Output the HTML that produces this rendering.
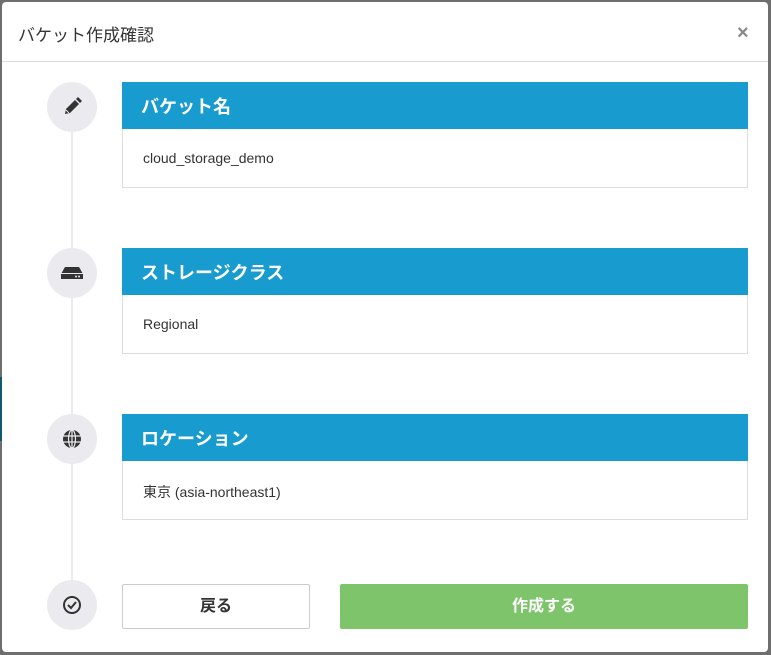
<!DOCTYPE html>
<html><head><meta charset="utf-8"><style>
*{margin:0;padding:0;box-sizing:border-box}
body{width:771px;height:655px;background:#6e6e6e;position:relative;overflow:hidden;font-family:"Liberation Sans","Noto Sans CJK JP",sans-serif}
.teal{position:absolute;left:0;top:377px;width:10px;height:64px;background:#0e5a70}
.modal{position:absolute;left:2px;top:2px;width:766px;height:650px;background:#fff;border-radius:4px}
.title{position:absolute;left:16px;top:19px;font-size:17px;color:#333}
.close{position:absolute;left:735px;top:20px;font-size:20px;color:#888;font-weight:bold}
.hr{position:absolute;left:0;top:59px;width:100%;height:1px;background:#ddd}
.line{position:absolute;left:69px;top:130px;width:2px;height:450px;background:#ebebef}
.c{position:absolute;left:45px;width:50px;height:50px;border-radius:50%;background:#ebebef;display:flex;align-items:center;justify-content:center}
.card{position:absolute;left:120px;width:626px}
.card .h{height:47px;background:#189bce;color:#fff;font-weight:bold;font-size:18px;padding:11px 0 0 19px}
.card .b{height:59px;border:1px solid #ddd;border-top:none;font-size:14px;color:#333;padding:21px 0 0 20px}
.btn1{position:absolute;left:120px;top:582px;width:188px;height:45px;border:1px solid #ccc;border-radius:2px;font-weight:bold;font-size:16px;color:#333;text-align:center;line-height:43px}
.btn2{position:absolute;left:338px;top:582px;width:408px;height:45px;background:#7ec46b;border-radius:2px;font-weight:bold;font-size:16px;color:#fff;text-align:center;line-height:45px}
</style></head><body>
<div class="teal"></div>
<div class="modal">
<div class="title">バケット作成確認</div>
<div class="close">×</div>
<div class="hr"></div>
<div class="line"></div>
<div class="c" style="top:80px"><svg width="22" height="22" viewBox="0 0 22 22"><path d="M4 18l1-5 9-9 4 4-9 9z" fill="#333"/><path d="M15 3l2-2 4 4-2 2z" fill="#333"/><path d="M5 14l3 3" stroke="#ebebef" stroke-width="1"/></svg></div>
<div class="c" style="top:246px"><svg width="24" height="16" viewBox="0 0 24 16"><path d="M5 2h14l4 7v5H1V9z" fill="#333"/><rect x="1" y="8" width="22" height="1" fill="#ebebef"/><circle cx="16" cy="11.5" r="1" fill="#ebebef"/><circle cx="19" cy="11.5" r="1" fill="#ebebef"/></svg></div>
<div class="c" style="top:412px"><svg width="20" height="20" viewBox="0 0 20 20"><circle cx="10" cy="10" r="9" fill="#333"/><g stroke="#ebebef" stroke-width="1.2" fill="none"><ellipse cx="10" cy="10" rx="3.5" ry="9"/><path d="M1 7h18M1 13h18M10 1v18"/></g></svg></div>
<div class="c" style="top:578px"><svg width="20" height="20" viewBox="0 0 20 20"><circle cx="10" cy="10" r="8" fill="none" stroke="#333" stroke-width="2"/><path d="M6 10l3 3 5-6" fill="none" stroke="#333" stroke-width="2"/></svg></div>
<div class="card" style="top:80px"><div class="h">バケット名</div><div class="b">cloud_storage_demo</div></div>
<div class="card" style="top:246px"><div class="h">ストレージクラス</div><div class="b">Regional</div></div>
<div class="card" style="top:412px"><div class="h">ロケーション</div><div class="b">東京 (asia-northeast1)</div></div>
<div class="btn1">戻る</div>
<div class="btn2">作成する</div>
</div>
</body></html>
